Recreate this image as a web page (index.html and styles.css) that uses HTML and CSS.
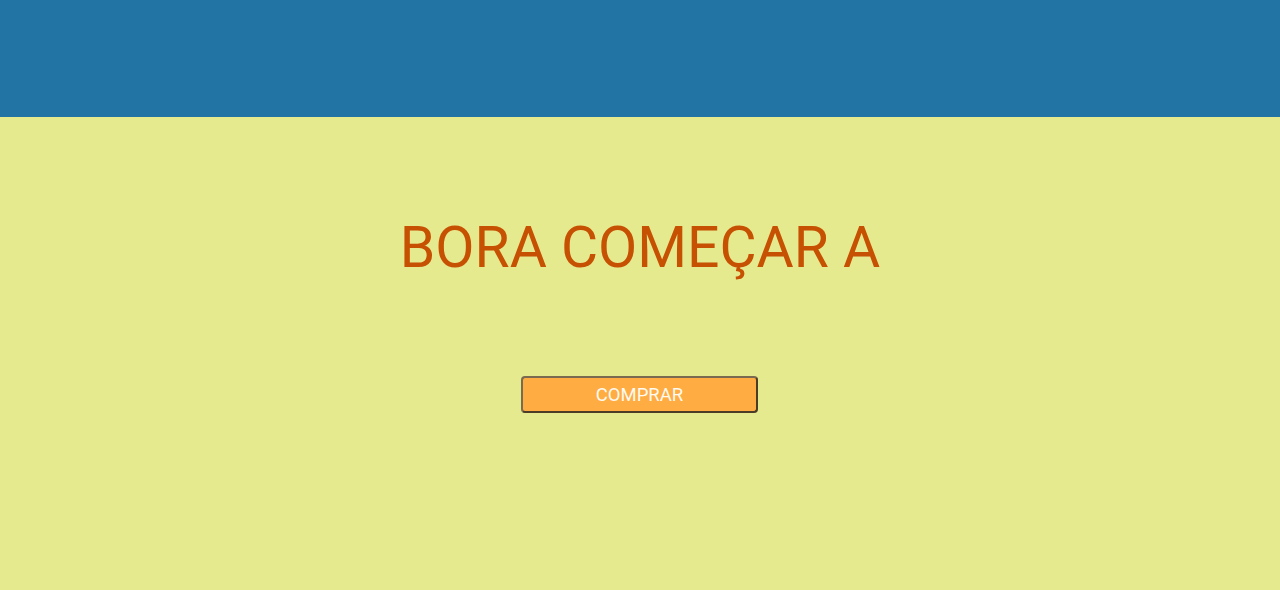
FILE: index.html
```html
<!DOCTYPE html>
<html lang="pt-BR">
<head>
<meta charset="utf-8">
<title>Bora começar</title>
<link rel="stylesheet" href="styles.css">
</head>
<body>
<header class="topbar"></header>
<main class="hero">
  <h1 class="hero-title">BORA COMEÇAR A</h1>
  <button class="buy-btn" type="button">COMPRAR</button>
</main>
</body>
</html>
```

FILE: styles.css
```css
html, body {
  margin: 0;
  padding: 0;
  height: 100%;
}
body {
  font-family: Roboto, "Liberation Sans", sans-serif;
  background: #e6ea8e;
  display: flex;
  flex-direction: column;
}
.topbar {
  height: 117px;
  background: #2274a5;
  flex: none;
}
.hero {
  flex: 1;
  display: flex;
  flex-direction: column;
  align-items: center;
  padding-top: 99px;
}
.hero-title {
  margin: 0;
  font-size: 57px;
  font-weight: 400;
  line-height: 64px;
  color: #c65102;
}
.buy-btn {
  margin-top: 96px;
  margin-right: 1px;
  width: 237px;
  height: 37px;
  background: #ffac42;
  border: 2px solid #4a3c26;
  border-top-color: #7a6a50;
  border-left-color: #7a6a50;
  border-radius: 4px;
  color: #fffaf0;
  font-family: Roboto, "Liberation Sans", sans-serif;
  font-size: 18.5px;
  padding: 0;
}
```
